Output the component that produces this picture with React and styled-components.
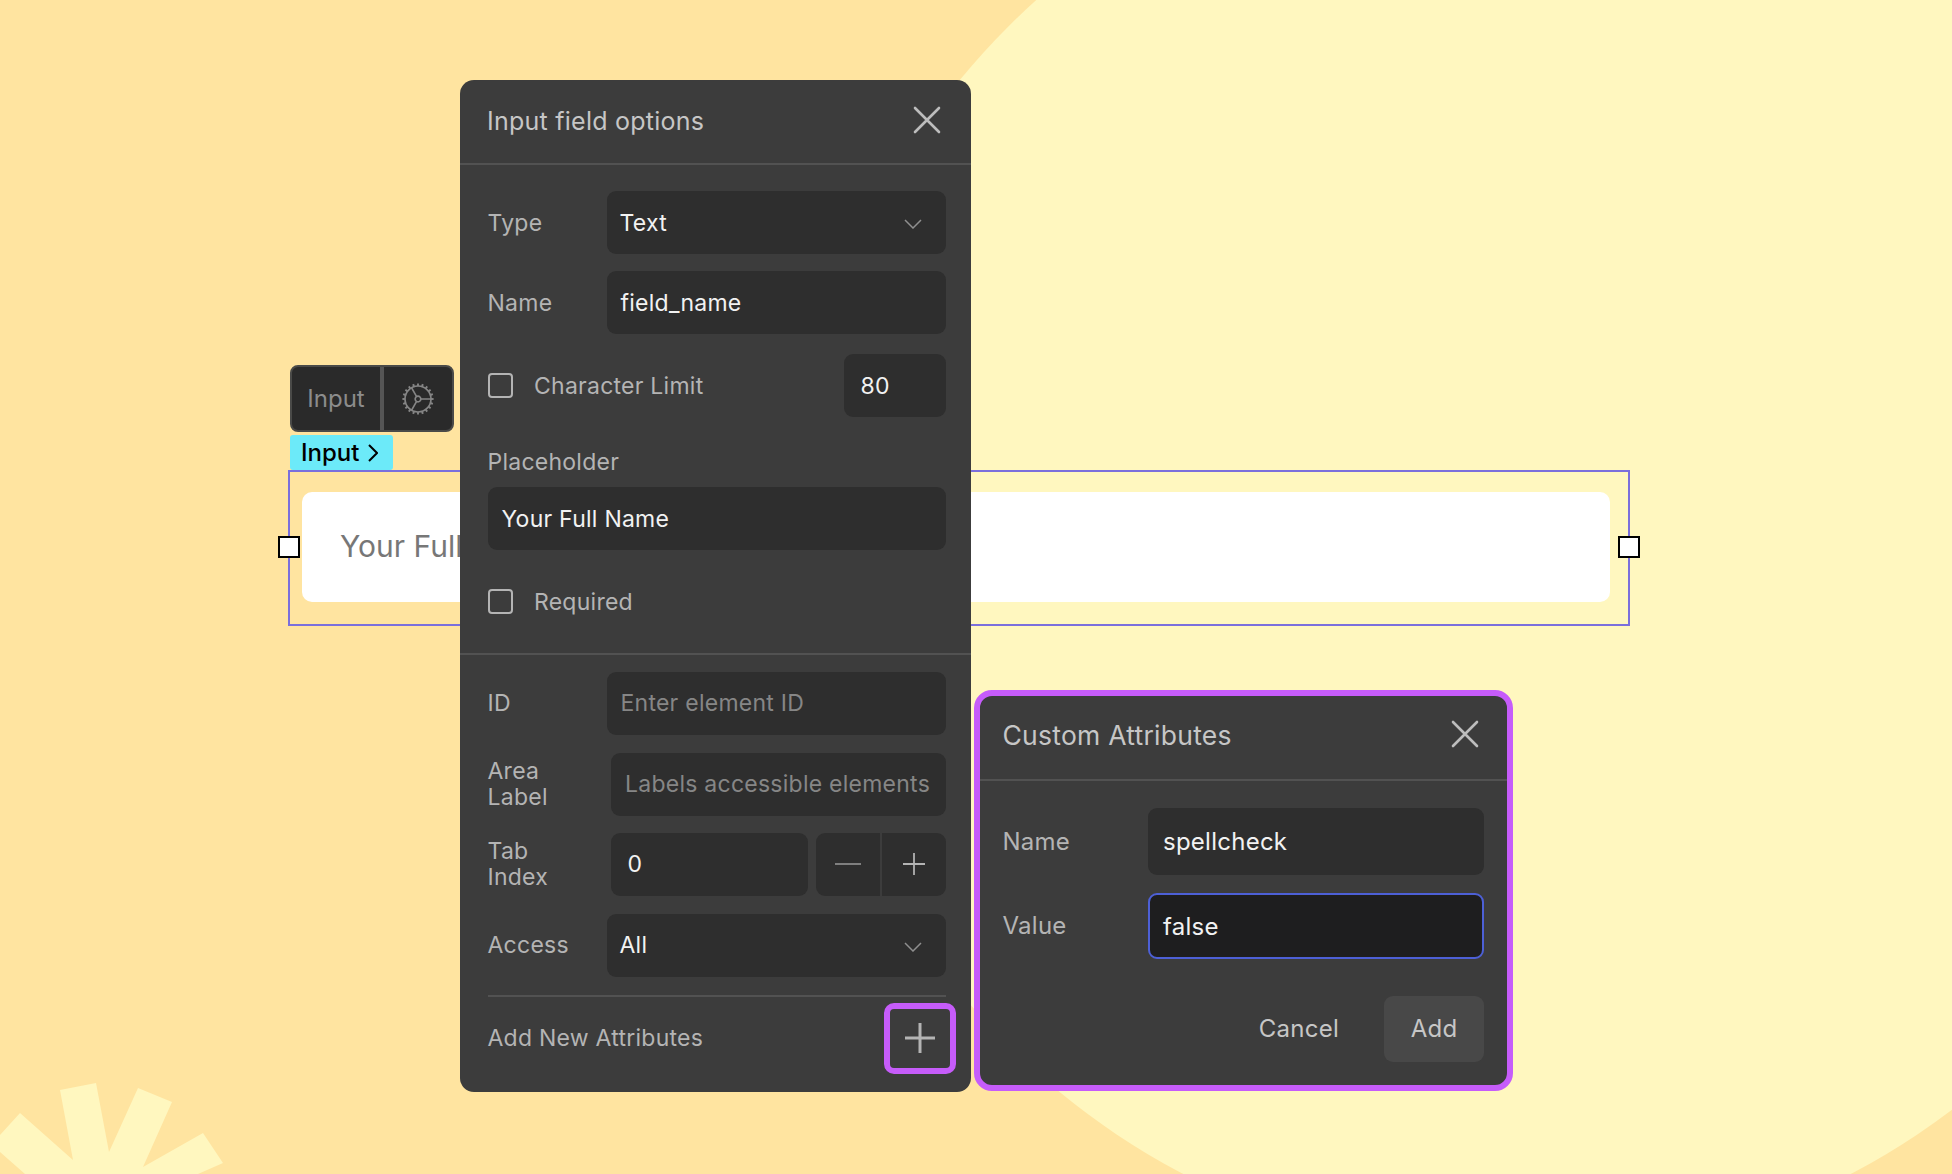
import React from "react";
import styled, { createGlobalStyle } from "styled-components";

const Global = createGlobalStyle`
  html, body { margin: 0; padding: 0; background: #ffe4a0; }
  body { font-family: "Inter", "Liberation Sans", sans-serif; -webkit-font-smoothing: antialiased; }
  * { box-sizing: border-box; }
`;

const Canvas = styled.div`
  position: relative;
  width: 1952px;
  height: 1174px;
  overflow: hidden;
  background: #ffe4a0;
`;
const Backdrop = styled.svg`
  position: absolute;
  inset: 0;
`;

/* ---------- selected element on the canvas ---------- */
const SelectionFrame = styled.div`
  position: absolute;
  left: 288px;
  top: 470px;
  width: 1342px;
  height: 156px;
  border: 2px solid #7b6fdc;
  padding: 20px 18px 22px 12px;
`;
const PreviewInput = styled.div`
  height: 110px;
  background: #fff;
  border-radius: 10px;
  padding: 0 0 3px 38px;
  display: flex;
  align-items: center;
  font-size: 30px;
  color: #777;
  white-space: nowrap;
`;
const Handle = styled.span`
  position: absolute;
  top: 64px;
  ${(p) => (p.$side === "left" ? "left: -12px;" : "right: -12px;")}
  width: 22px;
  height: 22px;
  background: #fff;
  border: 2.5px solid #000;
`;
const ElementBar = styled.div`
  position: absolute;
  left: 290px;
  top: 365px;
  width: 164px;
  height: 67px;
  display: flex;
  background: #2a2a2a;
  border: 2px solid #4a4a48;
  border-radius: 8px;
`;
const ElementName = styled.div`
  width: 92px;
  display: flex;
  align-items: center;
  justify-content: center;
  font-size: 24px;
  color: #8c8c8c;
  border-right: 4px solid #555;
`;
const GearSlot = styled.div`
  flex: 1;
  display: flex;
  align-items: center;
  justify-content: center;
`;
const Crumb = styled.div`
  position: absolute;
  left: 290px;
  top: 435px;
  width: 103px;
  height: 35px;
  display: flex;
  align-items: center;
  gap: 9px;
  padding-left: 11px;
  background: #6ceaf9;
  border-radius: 3px;
  font-size: 24px;
  font-weight: 500;
  color: #000;
`;

/* ---------- floating panels ---------- */
const Panel = styled.section`
  position: absolute;
  background: #3c3c3c;
  color: #b4b4b4;
  letter-spacing: 0.25px;
`;
const MainPanel = styled(Panel)`
  left: 460px;
  top: 80px;
  width: 510.5px;
  height: 1011.5px;
  border-radius: 14px;
  font-size: 23px;
`;
const AttrPanel = styled(Panel)`
  left: 974px;
  top: 690px;
  width: 539px;
  height: 401px;
  border: 6px solid #c65cfa;
  border-radius: 18px;
  font-size: 24px;
`;
const Header = styled.header`
  height: ${(p) => p.$h}px;
  display: flex;
  align-items: center;
  justify-content: space-between;
  padding: 0 ${(p) => p.$pr}px ${(p) => p.$drop}px ${(p) => p.$pl}px;
  border-bottom: 2px solid #525252;
`;
const Title = styled.h2`
  margin: 0;
  font-size: ${(p) => p.$size}px;
  font-weight: 400;
  color: #c6c6c6;
`;
const Body = styled.div`
  padding: 0 25px 0 27.5px;
  display: flex;
  flex-direction: column;
`;
const Row = styled.div`
  display: flex;
  align-items: center;
  height: ${(p) => p.$h || 63}px;
  margin-top: ${(p) => p.$top || 0}px;
`;
const Label = styled.label`
  flex: 0 0 ${(p) => p.$w || 119}px;
  line-height: 26px;
`;
const Field = styled.div`
  flex: ${(p) => (p.$w ? `0 0 ${p.$w}px` : 1)};
  height: ${(p) => p.$h || 63}px;
  display: flex;
  align-items: center;
  justify-content: space-between;
  padding: 0 ${(p) => p.$pr || 16}px 0 ${(p) => p.$pl || 14}px;
  background: ${(p) => (p.$focus ? "#1e1e1f" : "#2e2e2e")};
  border: ${(p) => (p.$focus ? "2px solid #4d60d6" : "none")};
  border-radius: 9px;
  color: ${(p) => (p.$muted ? "#868686" : "#f2f2f2")};
  white-space: nowrap;
`;
const Check = styled.span`
  flex: none;
  width: 25px;
  height: 25px;
  margin-right: 21.5px;
  border: 2px solid #b4b4b4;
  border-radius: 4px;
`;
const Spacer = styled.span`
  flex: 1;
`;
const Caption = styled.div`
  margin-top: ${(p) => p.$top}px;
  line-height: 28px;
`;
const Rule = styled.hr`
  margin: ${(p) => p.$top}px 0 0;
  border: 0;
  height: 2px;
  background: #525252;
`;
const Stepper = styled.div`
  flex: 0 0 130px;
  height: 63px;
  margin-left: 8px;
  display: grid;
  grid-template-columns: 66px 1fr;
  background: #2e2e2e;
  border-radius: 9px;
`;
const StepButton = styled.span`
  display: flex;
  align-items: center;
  justify-content: center;
  color: #b4b4b4;
  ${(p) => p.$divider && "border-right: 2px solid #3c3c3c;"}
`;
const AddRow = styled.div`
  margin-top: 6px;
  display: flex;
  align-items: center;
  justify-content: space-between;
  height: 71px;
  margin-right: -10px;
`;
const PlusButton = styled.button`
  width: 72px;
  height: 71px;
  display: flex;
  align-items: center;
  justify-content: center;
  padding: 0;
  background: transparent;
  border: 6px solid #c65cfa;
  border-radius: 10px;
`;
const AttrBody = styled.div`
  padding: 27px 23px 0 22.5px;
  display: flex;
  flex-direction: column;
`;
const Actions = styled.div`
  margin-top: 36.5px;
  display: flex;
  align-items: center;
  justify-content: flex-end;
`;
const CancelButton = styled.span`
  margin-right: 45px;
  color: #c6c6c6;
`;
const AddButton = styled.span`
  width: 100px;
  height: 66px;
  display: flex;
  align-items: center;
  justify-content: center;
  background: #484848;
  border-radius: 9px;
  color: #c6c6c6;
`;
const CloseIcon = styled.svg`
  margin-top: -2px;
`;

const Close = ({ color = "#bdbdbd" }) => (
  <CloseIcon width="28" height="28" viewBox="0 0 28 28" fill="none" stroke={color} strokeWidth="2.6" strokeLinecap="round">
    <path d="M2 2 L26 26 M26 2 L2 26" />
  </CloseIcon>
);
const Chevron = () => (
  <svg width="18" height="10" viewBox="0 0 18 10" fill="none" stroke="#8f8f8f" strokeWidth="1.5" style={{ marginTop: 3 }}>
    <path d="M1 1 L9 9 L17 1" />
  </svg>
);
const Plus = ({ size, width, color = "#b4b4b4" }) => (
  <svg width={size} height={size} viewBox="0 0 30 30" fill="none" stroke={color} strokeWidth={width}>
    <path d="M0 15 H30 M15 0 V30" />
  </svg>
);
const Gear = () => {
  const teeth = Array.from({ length: 20 }, (_, i) => i * 18);
  return (
    <svg width="36" height="36" viewBox="-18 -18 36 36" fill="none" stroke="#858585" strokeWidth="1.7">
      <circle r="13" />
      <circle r="2.8" />
      <path d="M2.8 0 H13 M-1.4 -2.4 L-6.5 -11.3 M-1.4 2.4 L-6.5 11.3" />
      {teeth.map((a) => (
        <path key={a} d="M0 -13 V-15.6" strokeWidth="1.9" transform={`rotate(${a})`} />
      ))}
    </svg>
  );
};

export default function App() {
  return (
    <Canvas>
      <Global />
      <Backdrop width="1952" height="1174" viewBox="0 0 1952 1174">
        <circle cx="1517" cy="536" r="720" fill="#fff7bf" />
        <path
          d="M0 1135 L20 1113 L73 1160 L60 1090 L96 1083 L109 1152 L138 1088 L172 1102 L143 1167 L203 1133 L223 1163 L198 1174 L25 1174 L0 1152 Z"
          fill="#fff7bf"
        />
      </Backdrop>

      <SelectionFrame>
        <PreviewInput>Your Full Name</PreviewInput>
        <Handle $side="left" />
        <Handle $side="right" />
      </SelectionFrame>
      <ElementBar>
        <ElementName>Input</ElementName>
        <GearSlot>
          <Gear />
        </GearSlot>
      </ElementBar>
      <Crumb>
        Input
        <svg width="10" height="18" viewBox="0 0 10 18" fill="none" stroke="#000" strokeWidth="2">
          <path d="M1 1 L9 9 L1 17" />
        </svg>
      </Crumb>

      <MainPanel>
        <Header $h={85} $pl={27} $pr={30} $drop={2}>
          <Title $size={25}>Input field options</Title>
          <Close />
        </Header>
        <Body>
          <Row $top={26}>
            <Label>Type</Label>
            <Field $pl={13} $pr={24}>
              Text
              <Chevron />
            </Field>
          </Row>
          <Row $top={17}>
            <Label>Name</Label>
            <Field>field_name</Field>
          </Row>
          <Row $top={20}>
            <Check />
            Character Limit
            <Spacer />
            <Field $w={102} $pl={17}>80</Field>
          </Row>
          <Caption $top={31}>Placeholder</Caption>
          <Row $top={11}>
            <Field>Your Full Name</Field>
          </Row>
          <Row $h={42} $top={30.5}>
            <Check />
            Required
          </Row>
        </Body>
        <Rule $top={30} />
        <Body>
          <Row $top={17}>
            <Label>ID</Label>
            <Field $muted>Enter element ID</Field>
          </Row>
          <Row $top={18}>
            <Label $w={123}>Area<br />Label</Label>
            <Field $muted $pl={14.5} $pr={0}>Labels accessible elements</Field>
          </Row>
          <Row $top={17}>
            <Label $w={123}>Tab<br />Index</Label>
            <Field $pl={17}>0</Field>
            <Stepper>
              <StepButton $divider>
                <svg width="26" height="2" viewBox="0 0 26 2"><path d="M0 1 H26" stroke="#7f7f7f" strokeWidth="2" /></svg>
              </StepButton>
              <StepButton>
                <Plus size={22} width={2.4} />
              </StepButton>
            </Stepper>
          </Row>
          <Row $top={18}>
            <Label>Access</Label>
            <Field $pl={13} $pr={24}>
              All
              <Chevron />
            </Field>
          </Row>
          <Rule $top={18} />
          <AddRow>
            Add New Attributes
            <PlusButton aria-label="Add new attribute">
              <Plus size={30} width={3} />
            </PlusButton>
          </AddRow>
        </Body>
      </MainPanel>

      <AttrPanel>
        <Header $h={85} $pl={22.5} $pr={28} $drop={6}>
          <Title $size={26.5}>Custom Attributes</Title>
          <Close />
        </Header>
        <AttrBody>
          <Row $h={67}>
            <Label $w={145}>Name</Label>
            <Field $h={67} $pl={15.5}>spellcheck</Field>
          </Row>
          <Row $h={66} $top={18}>
            <Label $w={145}>Value</Label>
            <Field $h={66} $pl={13.5} $focus>false</Field>
          </Row>
          <Actions>
            <CancelButton>Cancel</CancelButton>
            <AddButton>Add</AddButton>
          </Actions>
        </AttrBody>
      </AttrPanel>
    </Canvas>
  );
}
